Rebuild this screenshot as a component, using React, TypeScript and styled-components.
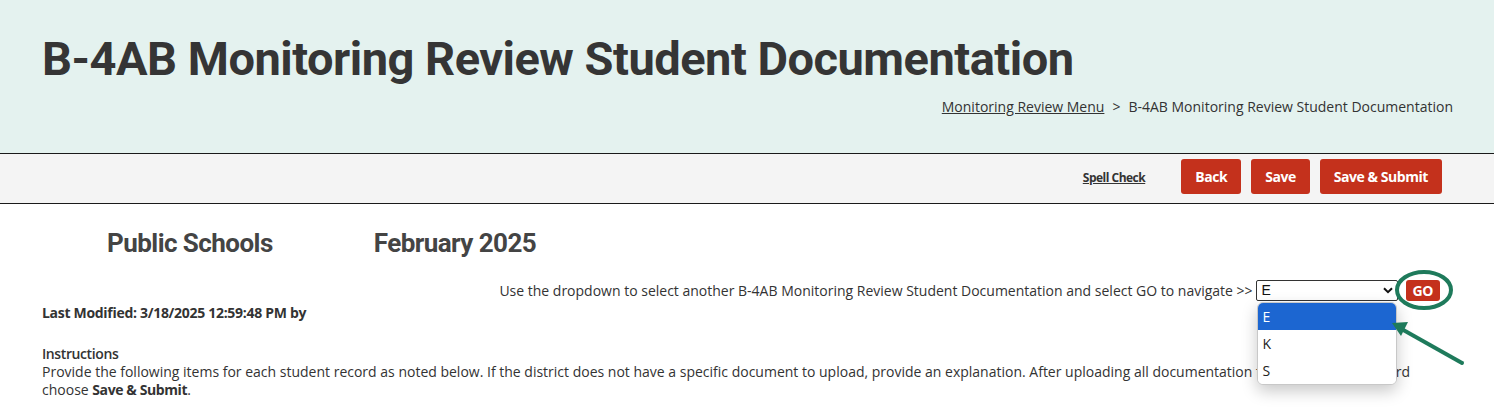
import React from "react";
import styled, { createGlobalStyle } from "styled-components";

const Global = createGlobalStyle`
  html, body { margin: 0; padding: 0; background: #fff; }
  body { font-family: "Open Sans", "Liberation Sans", sans-serif; color: #333; font-size: 14px; }
  * { box-sizing: border-box; }
`;

const Page = styled.div`
  width: 1494px;
  height: 408px;
  overflow: hidden;
`;

const Header = styled.header`
  background: #e4f2ef;
  height: 154px;
  border-bottom: 1px solid #1a1a1a;
  padding: 30px 41px 0 42px;
  display: flex;
  flex-direction: column;
`;

const Title = styled.h1`
  margin: 0;
  font-family: Roboto, "Liberation Sans", sans-serif;
  font-weight: 700;
  font-size: 47px;
  line-height: 58px;
  color: #353535;
  letter-spacing: -0.5px;
`;

const Breadcrumb = styled.nav`
  align-self: flex-end;
  margin-top: 9px;
  font-size: 14px;
  color: #333;
  display: flex;
  gap: 8px;
`;

const CrumbLink = styled.a`
  color: #333;
  text-decoration: underline;
`;

const Toolbar = styled.div`
  background: #f4f4f4;
  height: 50px;
  border-bottom: 1px solid #1a1a1a;
  display: flex;
  justify-content: flex-end;
  align-items: center;
  padding: 0 52px 4px 0;
  gap: 10px;
`;

const SpellCheck = styled.a`
  font-size: 12px;
  font-weight: 700;
  color: #333;
  text-decoration: underline;
  letter-spacing: -0.5px;
  margin-right: 26px;
  margin-top: 2px;
`;

const RedButton = styled.button<{ $small?: boolean }>`
  background: #c4311c;
  color: #fff;
  border: none;
  border-radius: 3px;
  font-family: "Open Sans", sans-serif;
  font-weight: 700;
  font-size: 14px;
  height: ${(p) => (p.$small ? "21px" : "35px")};
  padding: ${(p) => (p.$small ? "0 7px" : "0 14px")};
  letter-spacing: -0.45px;
  cursor: pointer;
`;

const Content = styled.main`
  padding: 0 42px;
`;

const OrgRow = styled.div`
  display: flex;
  gap: 101px;
  padding-left: 65px;
  margin-top: 23px;
`;

const OrgText = styled.h2`
  margin: 0;
  font-family: Roboto, "Liberation Sans", sans-serif;
  font-weight: 700;
  font-size: 26px;
  line-height: 32px;
  color: #444;
  letter-spacing: -0.55px;
`;

const NavRow = styled.div`
  display: flex;
  justify-content: flex-end;
  align-items: center;
  margin-top: 20px;
  margin-right: 12px;
  height: 22px;
`;

const NavLabel = styled.span`
  font-size: 14px;
  margin-right: 3px;
`;

const SelectWrap = styled.div`
  position: relative;
  margin-right: 8px;
`;

const Select = styled.div`
  width: 142px;
  height: 21px;
  border: 1px solid #333;
  border-radius: 2px;
  background: #fff;
  display: flex;
  align-items: center;
  justify-content: space-between;
  padding: 0 4px 0 5px;
  font-family: "Liberation Sans", Arial, sans-serif;
  font-size: 14px;
  color: #111;
`;

const OptionList = styled.ul`
  position: absolute;
  left: 1px;
  top: 22px;
  width: 140px;
  margin: 0;
  padding: 0;
  list-style: none;
  background: #fff;
  border: 1px solid #c8c8c8;
  border-radius: 6px;
  overflow: hidden;
  box-shadow: 0 6px 16px rgba(0, 0, 0, 0.22);
  z-index: 5;
`;

const Option = styled.li<{ $active?: boolean }>`
  height: 27px;
  display: flex;
  align-items: center;
  padding-left: 5px;
  font-size: 14px;
  background: ${(p) => (p.$active ? "#1c66d1" : "#fff")};
  color: ${(p) => (p.$active ? "#fff" : "#222")};
`;

const GoWrap = styled.div`
  position: relative;
  display: flex;
`;

const Annotation = styled.svg`
  position: absolute;
  left: -38px;
  top: -30px;
  pointer-events: none;
  overflow: visible;
  z-index: 6;
`;

const LastModified = styled.p`
  margin: 1px 0 0;
  font-size: 14px;
  font-weight: 700;
  line-height: 22px;
  letter-spacing: -0.3px;
`;

const InstructionsHead = styled.h3`
  margin: 20px 0 0;
  font-size: 14px;
  font-weight: 600;
  line-height: 19px;
  letter-spacing: -0.4px;
`;

const Para = styled.p`
  margin: 0;
  font-size: 14px;
  line-height: 18px;
  letter-spacing: 0;
  strong {
    font-weight: 700;
    letter-spacing: -0.4px;
  }
`;

const Chevron = () => (
  <svg width="10" height="7" viewBox="0 0 10 7">
    <path d="M1 1.2 L5 5.2 L9 1.2" fill="none" stroke="#111" strokeWidth="2" />
  </svg>
);

export default function App() {
  return (
    <Page>
      <Global />
      <Header>
        <Title>B-4AB Monitoring Review Student Documentation</Title>
        <Breadcrumb>
          <CrumbLink href="#">Monitoring Review Menu</CrumbLink>
          <span>&gt;</span>
          <span>B-4AB Monitoring Review Student Documentation</span>
        </Breadcrumb>
      </Header>
      <Toolbar>
        <SpellCheck href="#">Spell Check</SpellCheck>
        <RedButton>Back</RedButton>
        <RedButton>Save</RedButton>
        <RedButton>Save &amp; Submit</RedButton>
      </Toolbar>
      <Content>
        <OrgRow>
          <OrgText>Public Schools</OrgText>
          <OrgText>February 2025</OrgText>
        </OrgRow>
        <NavRow>
          <NavLabel>
            Use the dropdown to select another B-4AB Monitoring Review Student Documentation and select GO to navigate &gt;&gt;
          </NavLabel>
          <SelectWrap>
            <Select>
              <span>E</span>
              <Chevron />
            </Select>
            <OptionList>
              <Option $active>E</Option>
              <Option>K</Option>
              <Option>S</Option>
            </OptionList>
          </SelectWrap>
          <GoWrap>
            <RedButton $small>GO</RedButton>
            <Annotation width="110" height="110" viewBox="0 0 110 110">
              <ellipse cx="56" cy="40" rx="27" ry="18" fill="none" stroke="#1e7a5b" strokeWidth="4" />
              <line x1="94" y1="113" x2="30" y2="77" stroke="#1e7a5b" strokeWidth="4" strokeLinecap="round" />
              <path d="M24 73 L40 72 L33 86 Z" fill="#1e7a5b" />
            </Annotation>
          </GoWrap>
        </NavRow>
        <LastModified>Last Modified: 3/18/2025 12:59:48 PM by</LastModified>
        <InstructionsHead>Instructions</InstructionsHead>
        <Para>
          Provide the following items for each student record as noted below. If the district does not have a specific document to upload, provide an explanation. After uploading all documentation for each student record choose <strong>Save &amp; Submit</strong>.
        </Para>
      </Content>
    </Page>
  );
}
